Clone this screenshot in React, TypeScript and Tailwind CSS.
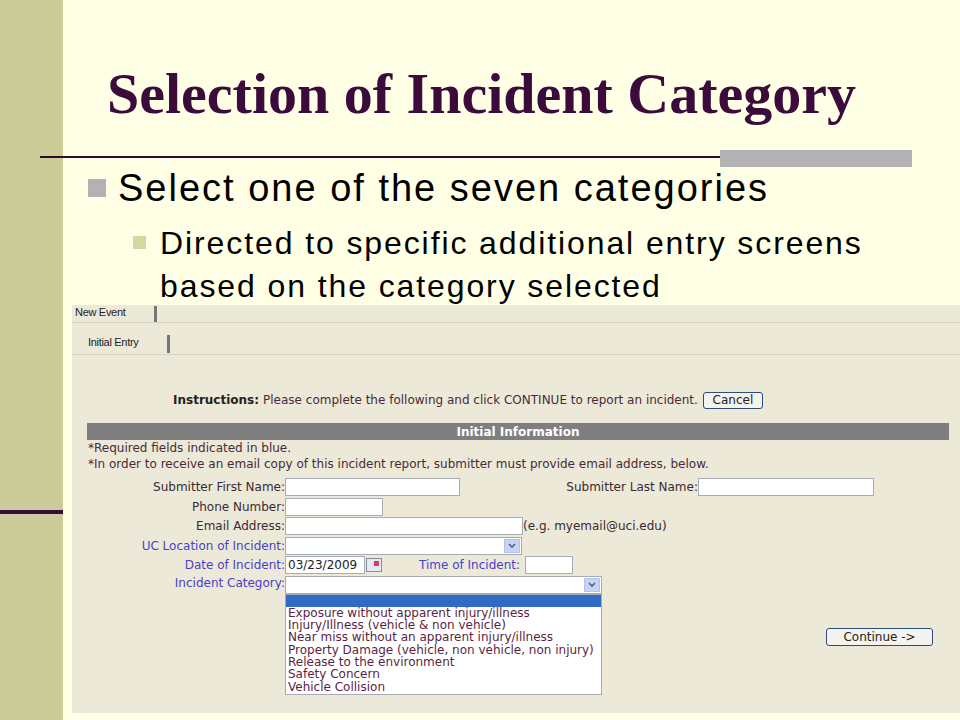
import React from "react";

const serif = { fontFamily: '"Liberation Serif", serif' };
const sans = { fontFamily: '"Liberation Sans", Arial, sans-serif' };
const tahoma = { fontFamily: '"DejaVu Sans", Verdana, sans-serif' };

function Field({ w, className = "" }: { w: string; className?: string }) {
  return <div className={`h-[18px] ${w} bg-white border border-[#a5acb5] ${className}`} />;
}

function Select({ w }: { w: string }) {
  return (
    <div className={`h-[18px] ${w} bg-white border border-[#a5acb5] flex justify-end items-center pr-[1px]`}>
      <div className="h-[14px] w-[16px] bg-[#c6d3f5] border border-[#b4c3ea] flex items-center justify-center">
        <svg width="8" height="6" viewBox="0 0 8 6"><path d="M1 1l3 3 3-3" stroke="#4d6185" strokeWidth="1.6" fill="none" /></svg>
      </div>
    </div>
  );
}

function Label({ children, blue }: { children: React.ReactNode; blue?: boolean }) {
  return (
    <div className={`w-[198px] text-right whitespace-nowrap ${blue ? "text-[#4a3fc8]" : "text-[#3a2a33]"}`}>{children}</div>
  );
}

const categories = [
  "Exposure without apparent injury/illness",
  "Injury/Illness (vehicle & non vehicle)",
  "Near miss without an apparent injury/illness",
  "Property Damage (vehicle, non vehicle, non injury)",
  "Release to the environment",
  "Safety Concern",
  "Vehicle Collision",
];

function Screenshot() {
  return (
    <div className="ml-[9px] h-[408px] bg-[#ece9d8] text-[12px] leading-[14px] overflow-hidden" style={tahoma}>
      <div className="flex items-end h-[18px] border-b border-[#d8d4c4]" style={sans}>
        <div className="w-[82px] pl-[3px] pb-[3px] text-[11px] tracking-[-0.3px] text-[#222]">New Event</div>
        <div className="w-[3px] h-[16px] bg-[#777]" />
      </div>
      <div className="flex items-end h-[32px] border-b border-[#d8d4c4]" style={sans}>
        <div className="w-[95px] pl-[16px] pb-[5px] text-[11px] tracking-[-0.3px] text-[#222]">Initial Entry</div>
        <div className="w-[3px] h-[18px] bg-[#777] mb-[1px]" />
      </div>
      <div className="flex items-center h-[18px] mt-[36px] pl-[101px] text-[#4a2a3a] whitespace-nowrap">
        <b className="text-[#222]">Instructions:</b>
        <span className="ml-[4px]">Please complete the following and click CONTINUE to report an incident.</span>
        <div className="ml-[5px] h-[17px] w-[60px] border border-[#2a4d78] rounded-[3px] bg-[#f4f3ee] flex items-center justify-center text-[#222]">Cancel</div>
      </div>
      <div className="ml-[15px] mr-[11px] mt-[14px] h-[17px] bg-[#7f7f7f] text-white font-bold flex items-center justify-center">
        Initial Information
      </div>
      <div className="pl-[16px] text-[#4a2a3a] mt-[1px] whitespace-nowrap">
        <div>*Required fields indicated in blue.</div>
        <div className="mt-[2px]">*In order to receive an email copy of this incident report, submitter must provide email address, below.</div>
      </div>
      <div className="pl-[15px] mt-[7px] flex flex-col gap-[1.5px]">
        <div className="flex items-center h-[18px]">
          <Label>Submitter First Name:</Label>
          <Field w="w-[175px]" />
          <div className="w-[238px] text-right text-[#3a2a33]">Submitter Last Name:</div>
          <Field w="w-[176px]" />
        </div>
        <div className="flex items-center h-[18px]">
          <Label>Phone Number:</Label>
          <Field w="w-[98px]" />
        </div>
        <div className="flex items-center h-[18px]">
          <Label>Email Address:</Label>
          <Field w="w-[238px]" />
          <span className="text-[#3a2a33]">(e.g. myemail@uci.edu)</span>
        </div>
        <div className="flex items-center h-[18px]">
          <Label blue>UC Location of Incident:</Label>
          <Select w="w-[237px]" />
        </div>
        <div className="flex items-center h-[18px]">
          <Label blue>Date of Incident:</Label>
          <div className="h-[18px] w-[80px] bg-white border border-[#a5acb5] pl-[2px] flex items-center text-[#222]">03/23/2009</div>
          <div className="ml-[1px] w-[16px] h-[14px] border border-[#8a8aa0] bg-[#e8e8f4] flex items-start justify-end">
            <div className="w-[5px] h-[5px] bg-[#d04060] m-[2px]" />
          </div>
          <div className="w-[138px] text-right text-[#4a3fc8]">Time of Incident:</div>
          <Field w="w-[48px]" className="ml-[5px]" />
        </div>
        <div className="flex items-start">
          <Label blue>Incident Category:</Label>
          <div className="flex flex-col">
            <Select w="w-[317px]" />
            <div className="w-[317px] bg-white border border-[#a5acb5] pb-[1px] text-[#5a1f45]">
              <div className="h-[12px] bg-[#316ac5]" />
              {categories.map((c) => (
                <div key={c} className="pl-[2px] h-[12.4px] leading-[12.4px] whitespace-nowrap">{c}</div>
              ))}
            </div>
          </div>
          <div className="ml-[224px] mt-[52px] h-[18px] w-[107px] border border-[#2a4d78] rounded-[3px] bg-[#f4f3ee] flex items-center justify-center text-[#222]">
            Continue -&gt;
          </div>
        </div>
      </div>
    </div>
  );
}

export default function App() {
  return (
    <div className="w-[960px] h-[720px] bg-[#ffffe5] flex overflow-hidden">
      <div className="w-[63px] shrink-0 bg-[#cccc99] flex flex-col">
        <div className="h-[510px]" />
        <div className="h-[4px] bg-[#3d0a3d]" />
      </div>
      <div className="flex-1 flex flex-col">
        <h1 className="h-[150px] pt-[62px] pl-[44px] text-[58px] leading-[64px] font-bold text-[#3b0b3b] whitespace-nowrap" style={serif}>
          Selection of Incident Category
        </h1>
        <div className="-ml-[23px] relative h-[8px] w-[872px]">
          <div className="absolute left-0 top-[6px] h-[2px] w-full bg-[#2e0a2e]" />
          <div className="absolute right-0 top-0 h-[17px] w-[192px] bg-[#b2b2b2]" />
        </div>
        <div className="pl-[25px] mt-[12px]" style={sans}>
          <div className="flex items-center">
            <div className="w-[18px] h-[18px] bg-[#b2b2b2]" />
            <span className="ml-[12px] text-[38px] leading-[36px] tracking-[2px] text-black whitespace-nowrap">Select one of the seven categories</span>
          </div>
          <div className="flex mt-[16px] pl-[45px]">
            <div className="w-[13px] h-[13px] bg-[#d6d6a2] mt-[14px]" />
            <span className="ml-[14px] text-[32px] leading-[43px] tracking-[1.9px] text-black whitespace-nowrap">
              Directed to specific additional entry screens
              <br />
              based on the category selected
            </span>
          </div>
        </div>
        <div className="mt-[-3px]">
          <Screenshot />
        </div>
      </div>
    </div>
  );
}
